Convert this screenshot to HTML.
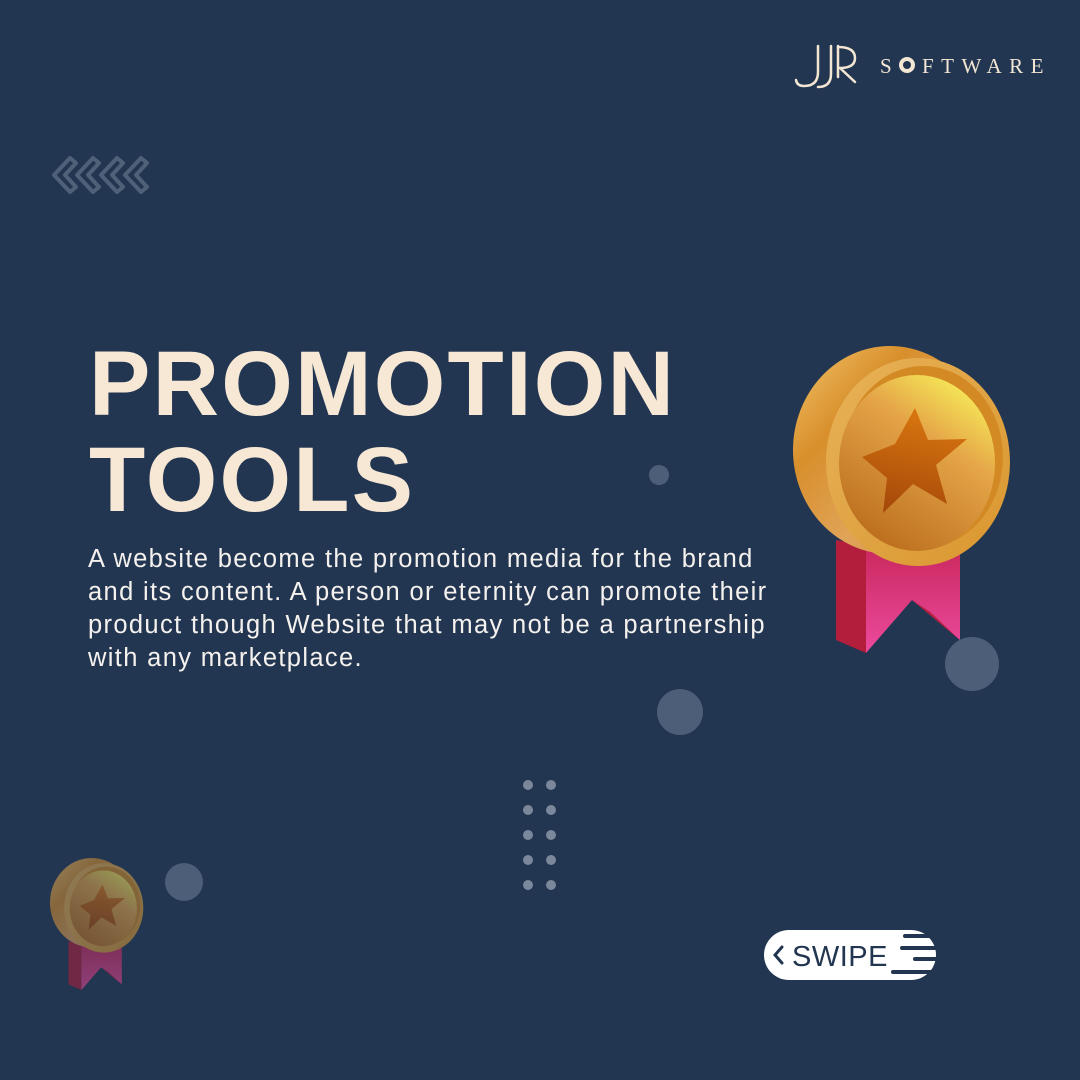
<!DOCTYPE html>
<html><head><meta charset="utf-8"><style>
html,body{margin:0;padding:0}
body{width:1080px;height:1080px;background:#233651;position:relative;overflow:hidden;font-family:"Liberation Sans",sans-serif}
.t{position:absolute;left:89px;color:#f7e8d5;font-weight:bold;font-size:92px;letter-spacing:2.2px;line-height:1;white-space:nowrap}
.p{position:absolute;left:88px;top:543px;color:#f4f1ee;font-size:25.5px;line-height:33px;white-space:nowrap;letter-spacing:1.35px}
</style></head><body>
<svg width="1080" height="1080" style="position:absolute;left:0;top:0">
<defs>
<linearGradient id="back" x1="0" y1="0" x2="1" y2="1"><stop offset="0" stop-color="#f3c46a"/><stop offset=".3" stop-color="#d88f2c"/><stop offset=".6" stop-color="#e0a458"/><stop offset="1" stop-color="#d08a3a"/></linearGradient>
<linearGradient id="rim" x1="0" y1="0" x2="1" y2="1"><stop offset="0" stop-color="#e8b258"/><stop offset="1" stop-color="#d9962e"/></linearGradient>
<linearGradient id="face" x1="0.8" y1="0" x2="0.2" y2="1"><stop offset="0" stop-color="#f8f25a"/><stop offset=".35" stop-color="#e5a548"/><stop offset="1" stop-color="#b86a1a"/></linearGradient>
<linearGradient id="star" x1="0.5" y1="0" x2="0.3" y2="1"><stop offset="0" stop-color="#d9770f"/><stop offset="1" stop-color="#a5480a"/></linearGradient>
<linearGradient id="rib" x1="0" y1="0" x2="0" y2="1"><stop offset="0" stop-color="#c9285c"/><stop offset="1" stop-color="#ec4a9e"/></linearGradient>
<g id="medal">
<polygon points="836,540 866,545 866,653 836,640" fill="#b21e3c"/>
<polygon points="866,545 960,545 960,640 912,600 866,653" fill="url(#rib)"/>
<polygon points="912,600 930,612 960,640" fill="#b21e3c"/>
<ellipse cx="890" cy="450" rx="97" ry="104" fill="url(#back)"/>
<ellipse cx="918" cy="462" rx="92" ry="104" fill="url(#rim)"/>
<ellipse cx="923" cy="457" rx="80" ry="91" fill="#d38a25"/>
<ellipse cx="917" cy="463" rx="78" ry="88" fill="url(#face)"/>
<polygon points="915,408 928,440 967,439 936,465 947,504 913,484 883,513 887,478 862,457 895,444" fill="url(#star)"/>
</g>
</defs>
<use href="#medal"/>
<g opacity="0.55" transform="translate(-291,709.2) scale(0.43)"><use href="#medal"/></g>
<g fill="#4c5e78">
<circle cx="659" cy="475" r="10"/><circle cx="972" cy="664" r="27"/><circle cx="680" cy="712" r="23"/><circle cx="184" cy="882" r="19"/>
</g>
<g fill="#7b879b">
<circle cx="528" cy="785" r="5"/><circle cx="551" cy="785" r="5"/>
<circle cx="528" cy="810" r="5"/><circle cx="551" cy="810" r="5"/>
<circle cx="528" cy="835" r="5"/><circle cx="551" cy="835" r="5"/>
<circle cx="528" cy="860" r="5"/><circle cx="551" cy="860" r="5"/>
<circle cx="528" cy="885" r="5"/><circle cx="551" cy="885" r="5"/>
</g>
<g fill="none" stroke="#4f6079" stroke-width="4" stroke-linejoin="round">
<path d="M70,158 L54,175 L70,192 L76,187 L65,175 L76,163 Z"/>
<path d="M93,158 L77,175 L93,192 L99,187 L88,175 L99,163 Z"/>
<path d="M117,158 L101,175 L117,192 L123,187 L112,175 L123,163 Z"/>
<path d="M141,158 L125,175 L141,192 L147,187 L136,175 L147,163 Z"/>
</g>
<g fill="none" stroke="#f3e6d3" stroke-width="2.5" stroke-linecap="round">
<path d="M818,46 L818,72 Q818,86 804,86 Q797,86 796,80"/>
<path d="M831,46 L831,74 Q831,87 818,87"/>
<path d="M838,46 L838,77"/>
<path d="M838,47 Q855,47 855,58 Q855,68 840,68 L855,82"/>
</g>
<text x="880" y="73" font-family="Liberation Serif,serif" font-size="21" fill="#f3e6d3" letter-spacing="7">S</text>
<circle cx="907" cy="65" r="8" fill="#f3e6d3"/><circle cx="907" cy="65" r="4" fill="#233651"/>
<text x="922" y="73" font-family="Liberation Serif,serif" font-size="21" fill="#f3e6d3" letter-spacing="7.5">FTWARE</text>
<rect x="764" y="930" width="172" height="50" rx="25" fill="#fff"/>
<path d="M782,947 L775,955 L782,963" fill="none" stroke="#233651" stroke-width="3" stroke-linecap="round"/>
<text x="792" y="966" font-family="Liberation Sans,sans-serif" font-size="29" fill="#233651" letter-spacing="0.5">SWIPE</text>
<g stroke="#233651" stroke-width="4" stroke-linecap="round">
<line x1="905" y1="936" x2="940" y2="936"/>
<line x1="902" y1="948" x2="940" y2="948"/>
<line x1="915" y1="959" x2="940" y2="959"/>
<line x1="893" y1="972" x2="940" y2="972"/>
</g>
</svg>
<div class="t" style="top:338px">PROMOTION</div>
<div class="t" style="top:434px">TOOLS</div>
<div class="p">A website become the promotion media for the brand<br>and its content. A person or eternity can promote their<br>product though Website that may not be a partnership<br>with any marketplace.</div>
</body></html>
